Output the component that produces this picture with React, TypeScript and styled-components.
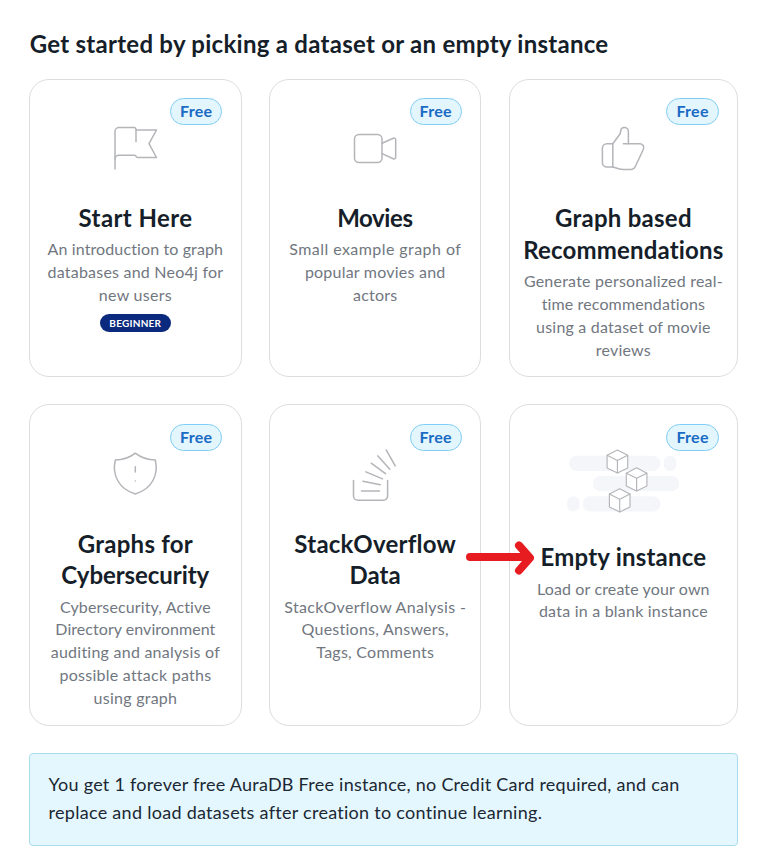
import React from "react";
import styled, { createGlobalStyle } from "styled-components";

const GlobalStyle = createGlobalStyle`
  *, *::before, *::after { box-sizing: border-box; }
  body { margin: 0; background: #fff; }
`;

const Page = styled.main`
  position: relative;
  width: 768px;
  height: 866px;
  padding: 28px 30px 0 29px;
  overflow: hidden;
  background: #fff;
  color: #151e29;
  font-family: Lato, "Noto Sans", sans-serif;
`;

const Heading = styled.h1`
  margin: 0 0 19px;
  padding-left: 0.7px;
  font-size: 24px;
  font-weight: 700;
  line-height: 32px;
  letter-spacing: 0.27px;
  white-space: nowrap;
`;

const Grid = styled.section`
  display: grid;
  grid-template-columns: 212.6px 212px 229.4px;
  grid-template-rows: 298px 321.4px;
  gap: 27.4px 27.5px;
`;

const Card = styled.article`
  position: relative;
  display: flex;
  flex-direction: column;
  align-items: center;
  border: 1px solid #dcdde0;
  border-radius: 20px;
  background: #fff;
  text-align: center;
`;

const FreeBadge = styled.span`
  position: absolute;
  top: 18.4px;
  right: 18.2px;
  width: 52.4px;
  height: 27px;
  border: 1px solid #7fcdf3;
  border-radius: 14px;
  background: #e3f6fe;
  color: #1a6bc4;
  font-size: 16px;
  font-weight: 700;
  line-height: 24px;
  letter-spacing: 0.3px;
`;

const IconArea = styled.div<{ $height: number }>`
  flex: none;
  height: ${(p) => p.$height}px;
  padding-top: 38.3px;

  svg {
    display: block;
    fill: none;
    stroke: #b3b5b9;
    stroke-width: 1.5;
    stroke-linecap: round;
    stroke-linejoin: round;
  }
`;

const Title = styled.h2`
  margin: 0 0 4.35px;
  font-size: 24px;
  font-weight: 700;
  line-height: 31.7px;
`;

const Description = styled.p`
  margin: 0;
  color: #71777f;
  font-size: 16px;
  line-height: 22.85px;
`;

const Line = styled.span<{ $tracking: number }>`
  display: block;
  margin-right: ${(p) => -p.$tracking}px;
  white-space: nowrap;
  letter-spacing: ${(p) => p.$tracking}px;
`;

const Level = styled.span`
  width: 71px;
  height: 18px;
  margin-top: 7.2px;
  border-radius: 9px;
  background: #0b297d;
  color: #fff;
  font-size: 10px;
  font-weight: 700;
  line-height: 18px;
  letter-spacing: 0.25px;
`;

const Notice = styled.aside`
  height: 93px;
  margin-top: 27.2px;
  padding: 16px 18.6px;
  border: 1px solid #a9dced;
  border-radius: 4px;
  background: #e4f7fe;
  color: #1b2733;
  font-size: 18px;
  line-height: 28px;
`;

const Arrow = styled.svg`
  position: absolute;
  left: 464px;
  top: 538px;
  fill: none;
  stroke: #e61c20;
  stroke-width: 8;
  stroke-linecap: round;
  stroke-linejoin: round;
`;

const FlagIcon = () => (
  <svg width="60" height="60" viewBox="0 0 60 60">
    <path d="M10 51V13.5a4 4 0 0 1 4-4H29a2 2 0 0 1 2 2.5V23.7" />
    <path d="M31 12H51.5L44 25.7L51.5 39.5H32.5a1.5 1.5 0 0 1-1.3-1a1.8 1.8 0 0 0-1.7-1.3H14a4 4 0 0 0-4 4" />
  </svg>
);

const VideoIcon = () => (
  <svg width="60" height="60" viewBox="0 0 60 60">
    <rect x="9.5" y="16.5" width="27.5" height="28" rx="4.5" />
    <path d="M37 25.3L48.3 20.2a1.7 1.7 0 0 1 2.4 1.6V39.2a1.7 1.7 0 0 1-2.4 1.6L37 35.6" />
  </svg>
);

const ThumbIcon = () => (
  <svg width="60" height="60" viewBox="0 0 60 60">
    <path d="M19.8 25.7H13.9a4.5 4.5 0 0 0-4.5 4.5V44.5a4.5 4.5 0 0 0 4.5 4.5H19.8Z" />
    <path d="M19.8 25.7L26.4 16.8a6 6 0 0 0 1.2-3.2c.1-2.5 1.6-4.2 3.8-4.2s4 1.8 4 4.1V25.7" />
    <path d="M30.4 25.7H46.5c3.4 0 5.2 2.8 3.8 5.8L42.2 48.8a4.4 4.4 0 0 1-4 2.6H29.9c-3.6 0-6.4-1.3-10.1-2.4" />
  </svg>
);

const ShieldIcon = () => (
  <svg width="60" height="60" viewBox="0 0 60 60">
    <path d="M30.3 9.2C25.3 13.2 18.8 16 10.3 16C6.8 31 13.8 45 30.3 50C46.8 45 53.8 31 50.3 16C41.8 16 35.3 13.2 30.3 9.2Z" />
    <path d="M30.3 22.8V28M30.3 37v.1" />
  </svg>
);

const StackIcon = () => (
  <svg width="60" height="60" viewBox="0 0 60 60">
    <path d="M8.5 36.5V51.9a4.3 4.3 0 0 0 4.3 4.3H38.3a4.3 4.3 0 0 0 4.3-4.3V36.5" />
    <path d="M16.5 47H34.5M17.9 37.2L35.3 40.7M20.9 27.9L37.5 34.9M26.2 19.2L40.5 29.7M32.9 11.9L44.8 25.2M41.2 5.9L50.2 21.9" />
  </svg>
);

const Cloud = styled.g`
  fill: #f5f6fa;
  stroke: none;
`;

const CubeShape = styled.g`
  fill: #fff;
  stroke-width: 1.15;
`;

const Cube = ({ x, y }: { x: number; y: number }) => (
  <CubeShape transform={`translate(${x} ${y})`}>
    <path d="M0 0L10.3 5.4V18.2L0 23.2L-10.3 18.2V5.4Z" />
    <path d="M-10.3 5.4L0 10.5L10.3 5.4M0 10.5V23.2" />
  </CubeShape>
);

const CubesIcon = () => (
  <svg width="120" height="75" viewBox="-0.4 0.3 120 75">
    <Cloud>
      <rect x="5.7" y="12" width="91.3" height="15.3" rx="7.6" />
      <rect x="100.4" y="12" width="12.6" height="15.3" rx="6.3" />
      <rect x="29.7" y="32.3" width="86" height="15.3" rx="7.6" />
      <rect x="3.7" y="52.5" width="12.5" height="15.3" rx="6.2" />
      <rect x="19.4" y="52.5" width="77.6" height="15.3" rx="7.6" />
    </Cloud>
    <Cube x={54} y={6.2} />
    <Cube x={73.2} y={24.1} />
    <Cube x={56.3} y={45} />
  </svg>
);

type TextLine = [text: string, tracking: number];

interface Dataset {
  icon: React.ReactNode;
  iconHeight?: number;
  title: TextLine[];
  description: TextLine[];
  level?: string;
}

const datasets: Dataset[] = [
  {
    icon: <FlagIcon />,
    title: [["Start Here", 0.42]],
    description: [["An introduction to graph", 0.12], ["databases and Neo4j for", 0.22], ["new users", 0.3]],
    level: "BEGINNER",
  },
  {
    icon: <VideoIcon />,
    title: [["Movies", -0.4]],
    description: [["Small example graph of", 0.43], ["popular movies and", 0.22], ["actors", 0.2]],
  },
  {
    icon: <ThumbIcon />,
    title: [["Graph based", 0.25], ["Recommendations", 0.17]],
    description: [
      ["Generate personalized real-", 0.22],
      ["time recommendations", 0.13],
      ["using a dataset of movie", 0.21],
      ["reviews", 0.2],
    ],
  },
  {
    icon: <ShieldIcon />,
    title: [["Graphs for", 0.25], ["Cybersecurity", -0.06]],
    description: [
      ["Cybersecurity, Active", 0.12],
      ["Directory environment", 0.05],
      ["auditing and analysis of", 0.24],
      ["possible attack paths", 0.25],
      ["using graph", 0.25],
    ],
  },
  {
    icon: <StackIcon />,
    title: [["StackOverflow", 0.25], ["Data", 0]],
    description: [["StackOverflow Analysis -", 0.33], ["Questions, Answers,", 0.25], ["Tags, Comments", 0.25]],
  },
  {
    icon: <CubesIcon />,
    iconHeight: 136.1,
    title: [["Empty instance", 0.2]],
    description: [["Load or create your own", 0.13], ["data in a blank instance", 0.22]],
  },
];

const Lines = ({ lines }: { lines: TextLine[] }) => (
  <>
    {lines.map(([text, tracking]) => (
      <Line key={text} $tracking={tracking}>{text}</Line>
    ))}
  </>
);

export default function App() {
  return (
    <>
      <GlobalStyle />
      <Page>
        <Heading>Get started by picking a dataset or an empty instance</Heading>
        <Grid>
          {datasets.map((d) => (
            <Card key={d.title[0][0]}>
              <FreeBadge>Free</FreeBadge>
              <IconArea $height={d.iconHeight ?? 122.4}>{d.icon}</IconArea>
              <Title><Lines lines={d.title} /></Title>
              <Description><Lines lines={d.description} /></Description>
              {d.level && <Level>{d.level}</Level>}
            </Card>
          ))}
        </Grid>
        <Notice>
          <Line $tracking={0.25}>You get 1 forever free AuraDB Free instance, no Credit Card required, and can</Line>
          <Line $tracking={0.28}>replace and load datasets after creation to continue learning.</Line>
        </Notice>
        <Arrow width="76" height="40" viewBox="0 0 76 40">
          <path d="M6 19H64" />
          <path d="M55 7.5L66 19.8L55 32.5" />
        </Arrow>
      </Page>
    </>
  );
}
